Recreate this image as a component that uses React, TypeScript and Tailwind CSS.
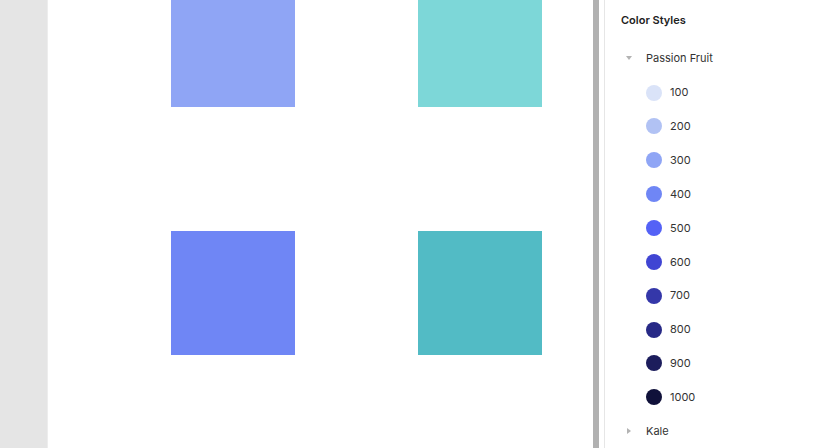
const shades = [
  { name: '100', color: '#dae3f8' },
  { name: '200', color: '#b1c2f4' },
  { name: '300', color: '#8fa5f5' },
  { name: '400', color: '#6f86f5' },
  { name: '500', color: '#5462f6' },
  { name: '600', color: '#4045d3' },
  { name: '700', color: '#3437a9' },
  { name: '800', color: '#272986' },
  { name: '900', color: '#1c1d5c' },
  { name: '1000', color: '#10113a' },
]

const squares = ['#8fa5f5', '#7dd7d8', '#6f86f5', '#52bbc5']

export default function App() {
  return (
    <div className="flex h-[448px] w-[838px] overflow-hidden bg-white font-['Inter',_'Liberation_Sans',_sans-serif]">
      {/* Left rail */}
      <div className="h-full w-[47px] shrink-0 bg-[#e5e5e5]" />
      <div className="h-full w-px shrink-0 bg-[#ededed]" />

      {/* Canvas */}
      <div className="h-full w-[545px] shrink-0 overflow-hidden bg-white">
        <div className="mt-[-17px] ml-[123px] grid w-max grid-cols-[124px_124px] gap-x-[123px] gap-y-[124px]">
          {squares.map((c, i) => (
            <div key={i} className="h-[124px] w-[124px]" style={{ backgroundColor: c }} />
          ))}
        </div>
      </div>

      {/* Scrollbar */}
      <div className="h-full w-[6px] shrink-0 bg-[#b1b1b1]" />
      <div className="h-full w-[5px] shrink-0 bg-white" />
      <div className="h-full w-px shrink-0 bg-[#e6e6e6]" />

      {/* Right panel */}
      <div className="flex h-full flex-1 flex-col bg-white text-[11px] text-[#333333]">
        <div className="flex h-[40px] items-center pl-4 font-semibold text-[#222]">Color Styles</div>
        <div className="flex h-[36px] items-center pl-[21px]">
          <svg width="6" height="4" viewBox="0 0 6 4" className="mr-[14px]">
            <path d="M0 0 L6 0 L3 4 Z" fill="#b3b3b3" />
          </svg>
          <span>Passion Fruit</span>
        </div>
        {shades.map((s) => (
          <div key={s.name} className="flex h-[34px] items-center pl-[41px]">
            <span className="mr-2 h-4 w-4 rounded-full" style={{ backgroundColor: s.color }} />
            <span>{s.name}</span>
          </div>
        ))}
        <div className="flex h-[34px] items-center pl-[22px]">
          <svg width="4" height="6" viewBox="0 0 4 6" className="mr-[15px]">
            <path d="M0 0 L4 3 L0 6 Z" fill="#b3b3b3" />
          </svg>
          <span>Kale</span>
        </div>
      </div>
    </div>
  )
}
